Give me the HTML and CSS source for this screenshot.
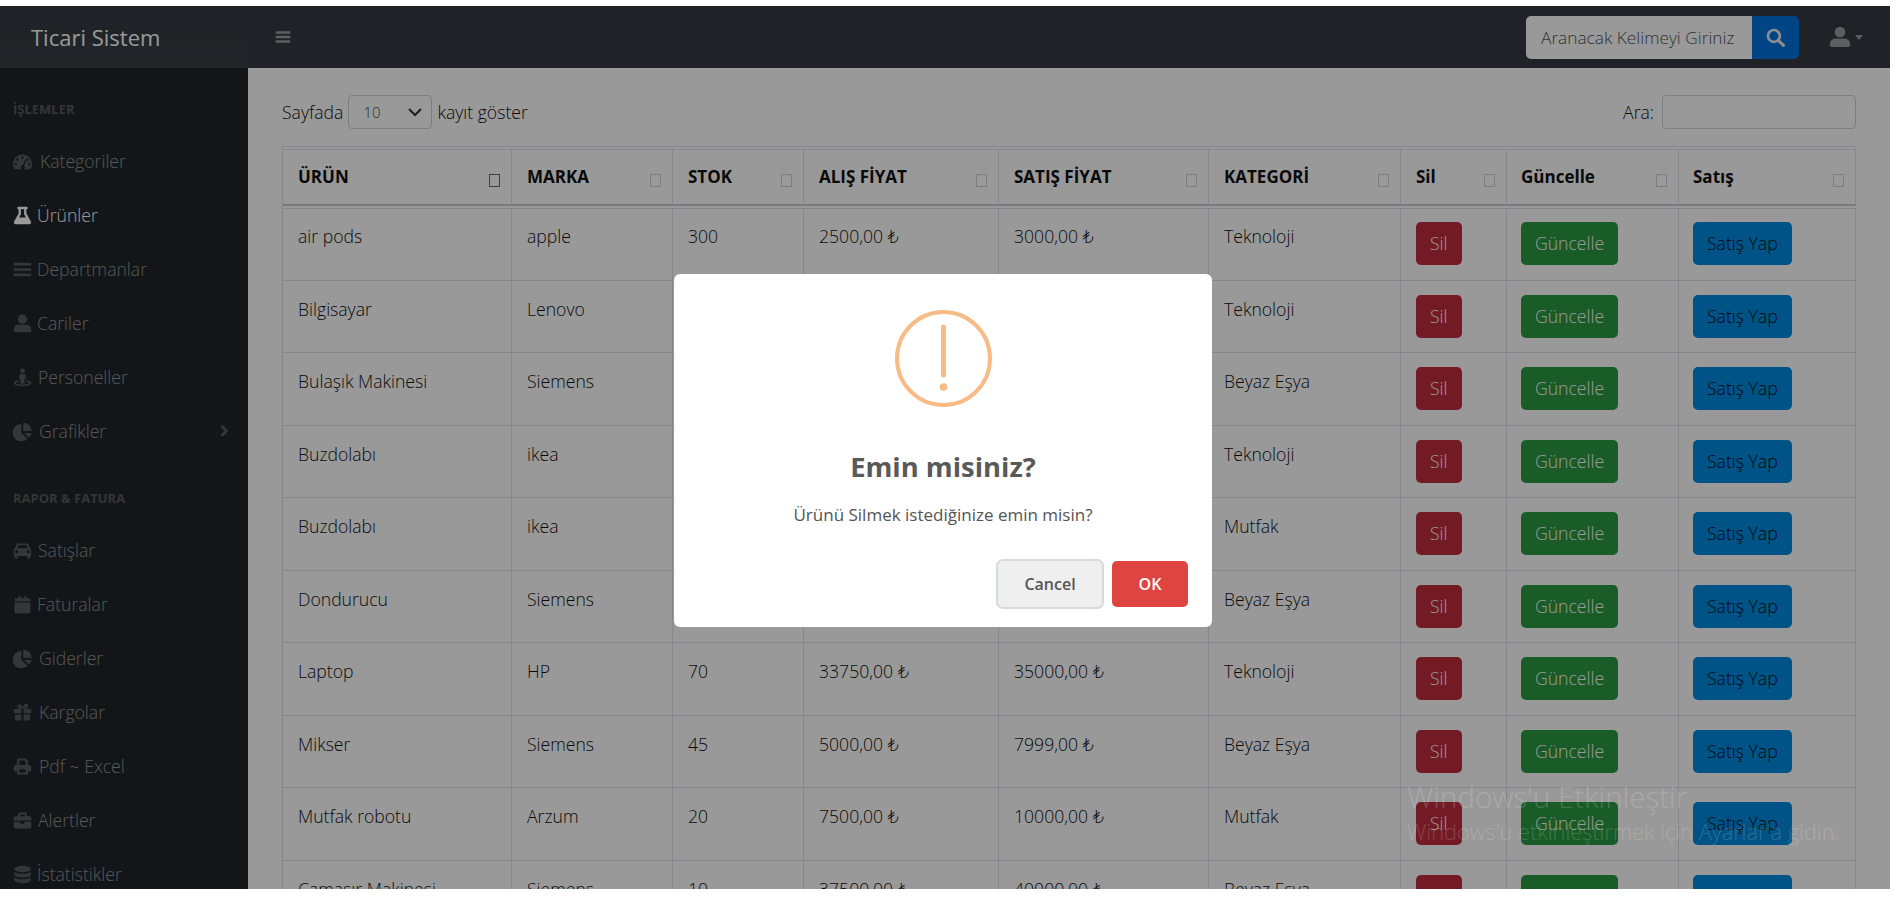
FILE: index.html
```html
<!DOCTYPE html>
<html lang="tr">

<head>
    <meta charset="UTF-8">
    <title>Ticari Sistem</title>
    <link rel="stylesheet" href="styles.css">
</head>

<body>
    <svg class="icon-defs" xmlns="http://www.w3.org/2000/svg">
        <symbol id="i-gauge" viewBox="0 0 24 24"><path fill-rule="evenodd" d="M12 3A12 12 0 0 0 0 15c0 2.200.6 4.200 1.600 6a1.500 1.500 0 0 0 1.300.8h18.200a1.500 1.500 0 0 0 1.300-.8c1-1.800 1.600-3.800 1.600-6A12 12 0 0 0 12 3zM12 5.500a1.600 1.600 0 1 1 0 3.200 1.600 1.600 0 0 1 0-3.200zM5.500 8a1.600 1.600 0 1 1 0 3.200 1.600 1.600 0 0 1 0-3.200zM18.500 8a1.600 1.600 0 1 1 0 3.200 1.600 1.600 0 0 1 0-3.200zM3.500 14a1.600 1.600 0 1 1 0 3.200 1.600 1.600 0 0 1 0-3.200zM20.500 14a1.600 1.600 0 1 1 0 3.200 1.600 1.600 0 0 1 0-3.200zM15.500 9.500l1.300.5-2.800 7.200a2.600 2.600 0 1 1-1.500-.5z"/></symbol>
        <symbol id="i-flask" viewBox="0 0 24 24"><path fill-rule="evenodd" d="M6.500 1h11a1 1 0 0 1 1 1v1a1 1 0 0 1-1 1H17v5.500l5.600 10.200A2.200 2.200 0 0 1 20.700 23H3.300a2.200 2.200 0 0 1-1.900-3.300L7 9.500V4h-.5a1 1 0 0 1-1-1V2a1 1 0 0 1 1-1zM10 4v6.300L7.700 14.500h8.600L14 10.300V4z"/></symbol>
        <symbol id="i-bars" viewBox="0 0 24 24"><path d="M1 3.500h22v3.500H1zM1 10.300h22v3.500H1zM1 17h22v3.500H1z"/></symbol>
        <symbol id="i-user" viewBox="0 0 24 24"><circle cx="12" cy="6.500" r="5.800"/><path d="M7 13.500h10a6 6 0 0 1 6 6V21a2 2 0 0 1-2 2H3a2 2 0 0 1-2-2v-1.500a6 6 0 0 1 6-6z"/></symbol>
        <symbol id="i-street" viewBox="0 0 24 24"><circle cx="12" cy="3.500" r="3"/><path d="M9.500 7.500h5a1.500 1.500 0 0 1 1.500 1.500v5h-1.500v6h-5v-6H8V9a1.500 1.500 0 0 1 1.500-1.500z"/><path fill-rule="evenodd" d="M7.500 15.500v1.800c-2.500.4-4.200 1.100-4.200 1.700 0 .8 3.800 1.800 8.700 1.800s8.700-1 8.700-1.800c0-.6-1.700-1.300-4.200-1.700v-1.800c3.800.5 6.500 1.800 6.500 3.500 0 2.300-4.900 4-11 4S1 21.300 1 19c0-1.700 2.700-3 6.500-3.500z"/></symbol>
        <symbol id="i-pie" viewBox="0 0 24 24"><path d="M10.500 2.500v11l7.800 7.800A11 11 0 1 1 10.500 2.500z"/><path d="M13 1a10.500 10.500 0 0 1 10.500 10.500H13z"/><path d="M14 14h9.500a10.500 10.500 0 0 1-3.300 5.700z"/></symbol>
        <symbol id="i-car" viewBox="0 0 24 24"><path fill-rule="evenodd" d="M6.500 3h11c1 0 1.900.6 2.300 1.600l1.600 4.400c1 .5 1.600 1.500 1.600 2.600V17c0 .8-.4 1.400-1 1.800V21a1 1 0 0 1-1 1h-2a1 1 0 0 1-1-1v-2H6v2a1 1 0 0 1-1 1H3a1 1 0 0 1-1-1v-2.200c-.6-.4-1-1-1-1.800v-5.400c0-1.100.6-2.100 1.600-2.600l1.600-4.400C4.600 3.600 5.500 3 6.500 3zM7 5.500L5.500 9h13L17 5.500zM4.500 11.500a2 2 0 1 0 0 4 2 2 0 0 0 0-4zM19.500 11.500a2 2 0 1 0 0 4 2 2 0 0 0 0-4z"/></symbol>
        <symbol id="i-calendar" viewBox="0 0 24 24"><path d="M7 1h2.500v3H14.500V1H17v3h3.500A1.500 1.500 0 0 1 22 5.500V8H2V5.500A1.500 1.500 0 0 1 3.500 4H7z"/><path d="M2 9.500h20v11.500a2 2 0 0 1-2 2H4a2 2 0 0 1-2-2z"/></symbol>
        <symbol id="i-gift" viewBox="0 0 24 24"><path d="M1 7.500h9.500V13H1zM13.500 7.500H23V13h-9.500zM2.500 14.500h8V22H4a1.500 1.500 0 0 1-1.500-1.500zM13.500 14.500h8v6A1.500 1.500 0 0 1 20 22h-6.500z"/><path fill-rule="evenodd" d="M8 2a3 3 0 0 1 2.600 1.400L12 5.500l1.400-2.100A3 3 0 1 1 16 7H8a2.500 2.500 0 0 1 0-5zM8 4a.8.8 0 0 0 0 1.500h1.500L8.800 4.400A.9.900 0 0 0 8 4zM16 4a.9.900 0 0 0-.8.4l-.7 1.100H16A.8.8 0 0 0 16 4z"/></symbol>
        <symbol id="i-print" viewBox="0 0 24 24"><path fill-rule="evenodd" d="M5 2h11l3 3v5h1.500A2.500 2.500 0 0 1 23 12.500V18h-4v4H5v-4H1v-5.500A2.500 2.500 0 0 1 3.500 10H5zM8 4.500V10h8V6l-1.500-1.500zM8 15.500v4h8v-4z"/></symbol>
        <symbol id="i-case" viewBox="0 0 24 24"><path fill-rule="evenodd" d="M8.500 2h7A2 2 0 0 1 17.500 4v2.500H21A2 2 0 0 1 23 8.500V12H1V8.500a2 2 0 0 1 2-2h3.500V4a2 2 0 0 1 2-2zM9 4.500v2h6v-2z"/><path d="M1 13.500h8.500V16h5v-2.500H23V20a2 2 0 0 1-2 2H3a2 2 0 0 1-2-2z"/></symbol>
        <symbol id="i-db" viewBox="0 0 24 24"><ellipse cx="12" cy="5" rx="10.500" ry="4"/><path d="M1.500 8.500C3.500 10.500 7.500 11 12 11s8.500-.5 10.500-2.500V12c0 2.200-4.700 4-10.500 4S1.500 14.200 1.500 12z"/><path d="M1.500 15.500C3.500 17.500 7.500 18 12 18s8.500-.5 10.500-2.500V19c0 2.200-4.700 4-10.500 4S1.500 21.200 1.500 19z"/></symbol>
    </svg>

    <div class="screen">
        <header class="topbar">
            <a class="brand">Ticari Sistem</a>
            <svg class="toggler"><use href="#i-bars"/></svg>
            <form class="top-search">
                <input type="text" placeholder="Aranacak Kelimeyi Giriniz">
                <button type="button" class="top-search-btn">
                    <svg viewBox="0 0 24 24" width="19" height="19"><circle cx="10" cy="10" r="7.500" fill="none" stroke="currentColor" stroke-width="3.400"/><path d="M15.500 15.500L22 22" stroke="currentColor" stroke-width="4" stroke-linecap="round"/></svg>
                </button>
            </form>
            <div class="user-menu">
                <svg class="user-icon"><use href="#i-user"/></svg>
                <span class="caret"></span>
            </div>
        </header>

        <div class="main">
            <nav class="sidebar">
                <div class="side-title">İşlemler</div>
                <a class="side-link"><svg class="side-icon gap-xl"><use href="#i-gauge"/></svg>Kategoriler</a>
                <a class="side-link active"><svg class="side-icon"><use href="#i-flask"/></svg>Ürünler</a>
                <a class="side-link"><svg class="side-icon"><use href="#i-bars"/></svg>Departmanlar</a>
                <a class="side-link"><svg class="side-icon"><use href="#i-user"/></svg>Cariler</a>
                <a class="side-link"><svg class="side-icon gap-m"><use href="#i-street"/></svg>Personeller</a>
                <a class="side-link"><svg class="side-icon gap-l"><use href="#i-pie"/></svg>Grafikler
                    <svg class="side-arrow" viewBox="0 0 10 14"><path d="M2.500 2l5 5-5 5" fill="none" stroke="currentColor" stroke-width="2.600"/></svg>
                </a>
                <div class="side-title">Rapor &amp; Fatura</div>
                <a class="side-link"><svg class="side-icon gap-m"><use href="#i-car"/></svg>Satışlar</a>
                <a class="side-link"><svg class="side-icon"><use href="#i-calendar"/></svg>Faturalar</a>
                <a class="side-link"><svg class="side-icon gap-l"><use href="#i-pie"/></svg>Giderler</a>
                <a class="side-link"><svg class="side-icon gap-l"><use href="#i-gift"/></svg>Kargolar</a>
                <a class="side-link"><svg class="side-icon gap-l"><use href="#i-print"/></svg>Pdf ~ Excel</a>
                <a class="side-link"><svg class="side-icon gap-m"><use href="#i-case"/></svg>Alertler</a>
                <a class="side-link"><svg class="side-icon"><use href="#i-db"/></svg>İstatistikler</a>
            </nav>

            <section class="content">
                <div class="table-tools">
                    <label class="length-box">Sayfada
                        <span class="fake-select">10
                            <svg viewBox="0 0 16 16" width="16" height="16"><path d="M2 5l6 6 6-6" fill="none" stroke="#343a40" stroke-width="2.200"/></svg>
                        </span>
                        kayıt göster</label>
                    <label class="filter-box">Ara: <input type="search"></label>
                </div>

                <table class="data-table">
                    <colgroup>
                        <col class="c1"><col class="c2"><col class="c3"><col class="c4"><col class="c5"><col class="c6"><col class="c7"><col class="c8"><col class="c9">
                    </colgroup>
                    <thead>
                        <tr>
                            <th><span class="sort dark"></span>ÜRÜN</th>
                            <th><span class="sort"></span>MARKA</th>
                            <th><span class="sort"></span>STOK</th>
                            <th><span class="sort"></span>ALIŞ FİYAT</th>
                            <th><span class="sort"></span>SATIŞ FİYAT</th>
                            <th><span class="sort"></span>KATEGORİ</th>
                            <th><span class="sort"></span>Sil</th>
                            <th><span class="sort"></span>Güncelle</th>
                            <th><span class="sort"></span>Satış</th>
                        </tr>
                    </thead>
                    <tbody>
                        <tr>
                            <td>air pods</td><td>apple</td><td>300</td><td>2500,00 ₺</td><td>3000,00 ₺</td><td>Teknoloji</td>
                            <td><a class="btn red">Sil</a></td><td><a class="btn green">Güncelle</a></td><td><a class="btn blue">Satış Yap</a></td>
                        </tr>
                        <tr>
                            <td>Bilgisayar</td><td>Lenovo</td><td></td><td></td><td></td><td>Teknoloji</td>
                            <td><a class="btn red">Sil</a></td><td><a class="btn green">Güncelle</a></td><td><a class="btn blue">Satış Yap</a></td>
                        </tr>
                        <tr>
                            <td>Bulaşık Makinesi</td><td>Siemens</td><td></td><td></td><td></td><td>Beyaz Eşya</td>
                            <td><a class="btn red">Sil</a></td><td><a class="btn green">Güncelle</a></td><td><a class="btn blue">Satış Yap</a></td>
                        </tr>
                        <tr>
                            <td>Buzdolabı</td><td>ikea</td><td></td><td></td><td></td><td>Teknoloji</td>
                            <td><a class="btn red">Sil</a></td><td><a class="btn green">Güncelle</a></td><td><a class="btn blue">Satış Yap</a></td>
                        </tr>
                        <tr>
                            <td>Buzdolabı</td><td>ikea</td><td></td><td></td><td></td><td>Mutfak</td>
                            <td><a class="btn red">Sil</a></td><td><a class="btn green">Güncelle</a></td><td><a class="btn blue">Satış Yap</a></td>
                        </tr>
                        <tr>
                            <td>Dondurucu</td><td>Siemens</td><td></td><td></td><td></td><td>Beyaz Eşya</td>
                            <td><a class="btn red">Sil</a></td><td><a class="btn green">Güncelle</a></td><td><a class="btn blue">Satış Yap</a></td>
                        </tr>
                        <tr>
                            <td>Laptop</td><td>HP</td><td>70</td><td>33750,00 ₺</td><td>35000,00 ₺</td><td>Teknoloji</td>
                            <td><a class="btn red">Sil</a></td><td><a class="btn green">Güncelle</a></td><td><a class="btn blue">Satış Yap</a></td>
                        </tr>
                        <tr>
                            <td>Mikser</td><td>Siemens</td><td>45</td><td>5000,00 ₺</td><td>7999,00 ₺</td><td>Beyaz Eşya</td>
                            <td><a class="btn red">Sil</a></td><td><a class="btn green">Güncelle</a></td><td><a class="btn blue">Satış Yap</a></td>
                        </tr>
                        <tr>
                            <td>Mutfak robotu</td><td>Arzum</td><td>20</td><td>7500,00 ₺</td><td>10000,00 ₺</td><td>Mutfak</td>
                            <td><a class="btn red">Sil</a></td><td><a class="btn green">Güncelle</a></td><td><a class="btn blue">Satış Yap</a></td>
                        </tr>
                        <tr>
                            <td>Çamaşır Makinesi</td><td>Siemens</td><td>10</td><td>37500,00 ₺</td><td>40000,00 ₺</td><td>Beyaz Eşya</td>
                            <td><a class="btn red">Sil</a></td><td><a class="btn green">Güncelle</a></td><td><a class="btn blue">Satış Yap</a></td>
                        </tr>
                    </tbody>
                </table>
            </section>
        </div>

        <!-- dialog on top of the whole page -->
        <div class="overlay">
            <div class="dialog">
                <svg class="warn-icon" viewBox="0 0 97 97" width="97" height="97">
                    <circle cx="48.500" cy="48.500" r="46.500" fill="none" stroke="#f8bb86" stroke-width="4"/>
                    <path d="M48.500 17v48" stroke="#f8bb86" stroke-width="5" stroke-linecap="round"/>
                    <circle cx="48.500" cy="77" r="3.800" fill="#f8bb86"/>
                </svg>
                <h2 class="dialog-title">Emin misiniz?</h2>
                <p class="dialog-text">Ürünü Silmek istediğinize emin misin?</p>
                <div class="dialog-actions">
                    <button type="button" class="btn-cancel">Cancel</button>
                    <button type="button" class="btn-ok">OK</button>
                </div>
            </div>
        </div>

        <div class="watermark">
            <div class="wm-big">Windows'u Etkinleştir</div>
            <div class="wm-small">Windows'u etkinleştirmek için Ayarlar'a gidin.</div>
        </div>
    </div>
</body>

</html>
```

FILE: styles.css
```css
body {
    margin: 0;
    background-color: #fff;
    font-family: "Open Sans", "DejaVu Sans", sans-serif;
    font-size: 17.600px;
    font-weight: 300;
    color: #111;
    overflow: hidden;
}

.icon-defs {
    display: none;
}

svg {
    fill: currentColor;
}

.screen {
    position: relative;
    display: flex;
    flex-direction: column;
    margin-top: 6px;
    width: 1890px;
    height: 883px;
    overflow: hidden;
    background-color: #fff;
}

/* top bar */
.topbar {
    display: flex;
    align-items: center;
    flex: 0 0 62px;
    background-color: #343a40;
}

.brand {
    display: flex;
    align-items: center;
    box-sizing: border-box;
    width: 248px;
    height: 100%;
    padding-left: 31px;
    font-size: 22px;
    font-weight: 400;
    color: #fff;
    background-image: linear-gradient(to bottom, #343a40, #383e44);
}

.toggler {
    width: 16px;
    height: 16px;
    margin-left: 27px;
    color: #9a9da0;
}

.top-search {
    display: flex;
    margin-left: auto;
    height: 43px;
}

.top-search input {
    box-sizing: border-box;
    width: 226px;
    padding: 0 0 0 15px;
    border: none;
    border-radius: 5px 0 0 5px;
    font-family: inherit;
    font-size: 17.300px;
    font-weight: 300;
    background-color: #fff;
}

.top-search input::placeholder {
    color: #4f555b;
    opacity: 1;
}

.top-search-btn {
    display: flex;
    align-items: center;
    justify-content: center;
    width: 47px;
    padding: 0;
    border: none;
    border-radius: 0 5px 5px 0;
    color: #e9ecef;
    background-color: #0072e0;
}

.user-menu {
    display: flex;
    align-items: center;
    gap: 4px;
    margin: 0 27px 0 30px;
    color: #9a9da0;
}

.user-icon {
    width: 22px;
    height: 22px;
}

.caret {
    border-top: 5px solid #9a9da0;
    border-left: 4px solid transparent;
    border-right: 4px solid transparent;
}

/* page body */
.main {
    display: flex;
    flex: 1;
    min-height: 0;
}

.sidebar {
    flex: 0 0 248px;
    box-sizing: border-box;
    padding-top: 1px;
    background-color: #212529;
    color: rgba(255, 255, 255, 0.5);
    overflow: hidden;
}

.side-title {
    height: 22px;
    margin: 29px 0 14px;
    padding-left: 13px;
    font-size: 13px;
    font-weight: 700;
    line-height: 22px;
    text-transform: uppercase;
    color: rgba(255, 255, 255, 0.25);
}

.side-link {
    display: flex;
    align-items: center;
    height: 54px;
    padding-left: 13px;
}

.side-link.active {
    color: #fff;
}

.side-icon {
    flex: none;
    width: 19px;
    height: 19px;
    margin-right: 5px;
    color: rgba(255, 255, 255, 0.25);
}

.side-icon.gap-m {
    margin-right: 6px;
}

.side-icon.gap-l {
    margin-right: 7px;
}

.side-icon.gap-xl {
    margin-right: 8px;
}

.active .side-icon {
    color: #fff;
}

.side-arrow {
    width: 10px;
    height: 14px;
    margin-left: auto;
    margin-right: 19px;
    color: rgba(255, 255, 255, 0.25);
}

/* table area */
.content {
    flex: 1;
    min-width: 0;
    padding: 27px 34px 0;
    overflow: hidden;
}

.table-tools {
    display: flex;
    justify-content: space-between;
    align-items: center;
    height: 34px;
    margin-bottom: 17px;
}

.length-box {
    display: flex;
    align-items: center;
    gap: 5px;
}

.fake-select {
    display: flex;
    align-items: center;
    justify-content: space-between;
    box-sizing: border-box;
    width: 84px;
    height: 34px;
    padding: 0 8px 0 14px;
    border: 1px solid #ced4da;
    border-radius: 4px;
    font-size: 15px;
    color: #495057;
}

.filter-box {
    display: flex;
    align-items: center;
    gap: 8px;
}

.filter-box input {
    box-sizing: border-box;
    width: 194px;
    height: 34px;
    border: 1px solid #ced4da;
    border-radius: 4px;
    background-color: #fff;
}

.data-table {
    box-sizing: border-box;
    width: 1574px;
    table-layout: fixed;
    border-collapse: separate;
    border-spacing: 0;
    border-top: 1px solid #dee2e6;
    border-left: 1px solid #dee2e6;
    padding-top: 2px;
}

.c1 { width: 229px; }
.c2 { width: 161px; }
.c3 { width: 131px; }
.c4 { width: 195px; }
.c5 { width: 210px; }
.c6 { width: 192px; }
.c7 { width: 106px; }
.c8 { width: 172px; }
.c9 { width: 177px; }

.data-table th {
    height: 57px;
    box-sizing: border-box;
    padding: 0 11px 2px 15px;
    border-top: 1px solid #dee2e6;
    border-right: 1px solid #dee2e6;
    border-bottom: 2px solid #c6cacd;
    font-size: 17px;
    font-weight: 700;
    text-align: left;
    white-space: nowrap;
}

/* small gap between the head and the first row */
.data-table tbody::before {
    content: "";
    display: table-row;
    height: 2px;
}

.sort {
    float: right;
    box-sizing: border-box;
    width: 11px;
    height: 13px;
    margin-top: 9px;
    border: 1px solid #cfd2d4;
}

.sort.dark {
    border-color: #6a6a6a;
}

.data-table td {
    box-sizing: border-box;
    height: 72.500px;
    padding: 14px 15px 0;
    border-right: 1px solid #dee2e6;
    border-bottom: 1px solid #dee2e6;
    line-height: 28px;
    vertical-align: top;
    white-space: nowrap;
}

.data-table tbody tr:first-child td {
    padding-top: 13px;
    border-top: 1px solid #dee2e6;
}

.data-table th:nth-child(n+8),
.data-table td:nth-child(n+8) {
    padding-left: 14px;
}

.btn {
    display: inline-block;
    box-sizing: border-box;
    height: 43px;
    padding: 0 14px;
    border-radius: 5px;
    line-height: 43px;
    vertical-align: top;
}

.red {
    color: #fff;
    background-color: #c02d3e;
}

.green {
    color: #fff;
    background-color: #2a9a42;
}

.blue {
    color: #0a0a0a;
    background-color: #008ae0;
}

/* dialog */
.overlay {
    position: absolute;
    top: 0;
    left: 0;
    right: 0;
    bottom: 0;
    display: flex;
    justify-content: center;
    align-items: flex-start;
    box-sizing: border-box;
    padding: 268px 4px 0 0;
    background-color: rgba(0, 0, 0, 0.4);
}

.dialog {
    display: flex;
    flex-direction: column;
    align-items: center;
    box-sizing: border-box;
    width: 538px;
    height: 353px;
    padding: 36px 24px 0;
    border-radius: 6px;
    background-color: #fff;
}

.dialog-title {
    margin: 40px 0 0;
    font-size: 27.400px;
    font-weight: 700;
    line-height: 40px;
    color: #595959;
}

.dialog-text {
    margin: 15px 0 0;
    font-size: 17px;
    font-weight: 400;
    line-height: 26px;
    color: #545454;
}

.dialog-actions {
    display: flex;
    align-self: flex-end;
    align-items: center;
    gap: 10px;
    margin-top: 33px;
}

.btn-cancel,
.btn-ok {
    height: 46px;
    border: none;
    border-radius: 5px;
    font-family: inherit;
    font-size: 16px;
    font-weight: 600;
}

.btn-cancel {
    width: 104px;
    color: #555;
    background-color: #efefef;
    box-shadow: 0 0 0 2px #d5d9e0;
}

.btn-ok {
    width: 76px;
    color: #fff;
    background-color: #e04440;
}

/* activation text from the OS, lies over everything */
.watermark {
    position: absolute;
    top: 771px;
    left: 1407px;
    color: rgba(255, 255, 255, 0.18);
    white-space: nowrap;
}

.wm-big {
    font-size: 29.500px;
    line-height: 40px;
}

.wm-small {
    font-size: 21.700px;
    line-height: 29px;
}
```
